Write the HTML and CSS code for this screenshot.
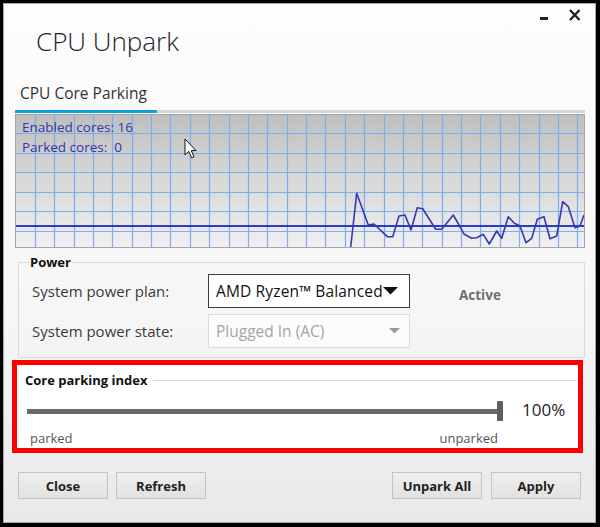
FILE: index.html
```html
<!DOCTYPE html>
<html>
<head>
<meta charset="utf-8">
<link rel="stylesheet" href="styles.css">
</head>
<body>
<div class="window">
  <div class="header">
    <div class="title">CPU Unpark</div>
    <svg class="controls" width="41" height="12" viewBox="0 0 41 12">
      <rect x="0" y="8" width="8" height="3" fill="#222"/>
      <path d="M30 1 L39.5 11 M39.5 1 L30 11" stroke="#222" stroke-width="2.4" fill="none"/>
    </svg>
  </div>
  <div class="tab">CPU Core Parking</div>
  <div class="tabbar"><div class="tabbar-active"></div></div>
  <div class="graph">
    <svg class="graph-svg" width="568" height="132" viewBox="16 115 568 132">
      <g stroke="#7cadf3" stroke-width="1.2">
        <line x1="35.5" y1="115" x2="35.5" y2="247"/><line x1="54.5" y1="115" x2="54.5" y2="247"/>
        <line x1="74.5" y1="115" x2="74.5" y2="247"/><line x1="93.5" y1="115" x2="93.5" y2="247"/>
        <line x1="112.5" y1="115" x2="112.5" y2="247"/><line x1="132.5" y1="115" x2="132.5" y2="247"/>
        <line x1="151.5" y1="115" x2="151.5" y2="247"/><line x1="170.5" y1="115" x2="170.5" y2="247"/>
        <line x1="190.5" y1="115" x2="190.5" y2="247"/><line x1="209.5" y1="115" x2="209.5" y2="247"/>
        <line x1="229.5" y1="115" x2="229.5" y2="247"/><line x1="248.5" y1="115" x2="248.5" y2="247"/>
        <line x1="267.5" y1="115" x2="267.5" y2="247"/><line x1="287.5" y1="115" x2="287.5" y2="247"/>
        <line x1="306.5" y1="115" x2="306.5" y2="247"/><line x1="325.5" y1="115" x2="325.5" y2="247"/>
        <line x1="345.5" y1="115" x2="345.5" y2="247"/><line x1="364.5" y1="115" x2="364.5" y2="247"/>
        <line x1="384.5" y1="115" x2="384.5" y2="247"/><line x1="403.5" y1="115" x2="403.5" y2="247"/>
        <line x1="422.5" y1="115" x2="422.5" y2="247"/><line x1="442.5" y1="115" x2="442.5" y2="247"/>
        <line x1="461.5" y1="115" x2="461.5" y2="247"/><line x1="480.5" y1="115" x2="480.5" y2="247"/>
        <line x1="500.5" y1="115" x2="500.5" y2="247"/><line x1="519.5" y1="115" x2="519.5" y2="247"/>
        <line x1="539.5" y1="115" x2="539.5" y2="247"/><line x1="558.5" y1="115" x2="558.5" y2="247"/>
        <line x1="577.5" y1="115" x2="577.5" y2="247"/>
        <line x1="16" y1="133.5" x2="584" y2="133.5"/><line x1="16" y1="153.5" x2="584" y2="153.5"/>
        <line x1="16" y1="172.5" x2="584" y2="172.5"/><line x1="16" y1="192.5" x2="584" y2="192.5"/>
        <line x1="16" y1="211.5" x2="584" y2="211.5"/><line x1="16" y1="231.5" x2="584" y2="231.5"/>
      </g>
      <line x1="16" y1="226" x2="584" y2="226" stroke="#2c3cc4" stroke-width="2.2"/>
      <polyline fill="none" stroke="#3438b4" stroke-width="1.6" stroke-linejoin="round"
        points="350.7,247 356.7,193.3 368.3,225 374,224 387.3,236.7 392.7,236.7 399,216 405,215 411,230 417.3,207.7 422.7,208.7 435.7,229.3 441.7,229.3 453.3,215 464.3,234.3 471.7,238.3 476.7,237.7 483.3,234.3 489.3,244 496.7,231 501.7,238.3 508.3,216.7 514.3,223.3 520,226 526,242.7 531.7,238.3 537.3,219.3 544,216.7 550,238.7 556.7,236 562.7,201.7 568.3,206.7 575,227.7 580,226 584,215"/>
    </svg>
    <div class="graph-text">
      <div>Enabled cores: 16</div>
      <div>Parked cores:&nbsp;&nbsp;0</div>
    </div>
    <svg class="cursor" width="13" height="21" viewBox="0 0 13 21">
      <path d="M1 1 L1 17 L4.8 13.4 L7.6 19.8 L10 18.8 L7.3 12.6 L12 12.6 Z" fill="#fff" stroke="#111" stroke-width="1" stroke-linejoin="round"/>
    </svg>
  </div>
  <fieldset class="power">
    <legend class="legend">Power</legend>
    <div class="power-grid">
      <div class="label">System power plan:</div>
      <div class="select">
        <span>AMD Ryzen™ Balanced</span>
        <svg width="15" height="8" viewBox="0 0 15 8"><path d="M0 0 L15 0 L7.5 7.5 Z" fill="#111"/></svg>
      </div>
      <div class="status">Active</div>
      <div class="label">System power state:</div>
      <div class="select disabled">
        <span>Plugged In (AC)</span>
        <svg width="11" height="6" viewBox="0 0 11 6"><path d="M0 0 L11 0 L5.5 5.5 Z" fill="#9a9a9a"/></svg>
      </div>
      <div></div>
    </div>
  </fieldset>
  <div class="highlight">
    <div class="group-head">
      <span class="legend">Core parking index</span>
      <span class="group-line"></span>
    </div>
    <div class="slider-row">
      <div class="slider">
        <div class="track"></div>
        <div class="thumb"></div>
      </div>
      <div class="percent">100%</div>
    </div>
    <div class="slider-labels">
      <span>parked</span>
      <span>unparked</span>
    </div>
  </div>
  <div class="buttons">
    <div class="btn-group">
      <button class="btn">Close</button>
      <button class="btn">Refresh</button>
    </div>
    <div class="btn-group right">
      <button class="btn">Unpark All</button>
      <button class="btn">Apply</button>
    </div>
  </div>
</div>
</body>
</html>
```
FILE: styles.css
```css
html, body {
  margin: 0;
  padding: 0;
  background: #000;
}
body {
  width: 600px;
  height: 527px;
  overflow: hidden;
  font-family: "Open Sans", "Noto Sans", sans-serif;
}
.window {
  margin: 3px 0 0 3px;
  width: 593px;
  height: 520px;
  box-sizing: border-box;
  border: 1px solid #a9a9a9;
  background: linear-gradient(#fdfdfd, #f6f6f6 60%, #e9e9e9);
  padding: 0 10px 0 11px;
  display: flex;
  flex-direction: column;
}
.header {
  display: flex;
  justify-content: space-between;
  align-items: flex-start;
  height: 72px;
}
.title {
  margin: 23px 0 0 21px;
  font-size: 26px;
  line-height: 28px;
  font-weight: 300;
  color: #22222e;
}
.controls {
  margin: 5px 4px 0 0;
}
.tab {
  margin: 9px 0 0 5px;
  font-size: 15.5px;
  line-height: 16px;
  color: #333;
}
.tabbar {
  margin-top: 9px;
  height: 3px;
  background: #d6d6d6;
}
.tabbar-active {
  width: 142px;
  height: 3px;
  background: #13a0e2;
}
.graph {
  margin-top: 1px;
  height: 134px;
  box-sizing: border-box;
  border: 1px solid #a5a5a5;
  background: linear-gradient(#bfbfbf, #d8d8d8 50%, #f0f0f0);
  position: relative;
}
.graph-svg {
  position: absolute;
  left: 0;
  top: 0;
}
.graph-text {
  position: relative;
  padding: 3px 0 0 6px;
  font-size: 13.5px;
  line-height: 19.5px;
  color: #3535a6;
}
.cursor {
  position: absolute;
  left: 168px;
  top: 23px;
}
.power {
  margin: 6px 0 0 3px;
  padding: 4px 0 9px 11px;
  border: 1px solid #dadada;
  min-width: 0;
}
.legend {
  padding: 0;
  font-weight: bold;
  font-size: 13px;
  line-height: 16px;
  color: #111;
}
.power-grid {
  display: grid;
  grid-template-columns: 176px 202px auto;
  row-gap: 6px;
  align-items: center;
  padding-left: 2px;
}
.label {
  font-size: 15px;
  color: #3a3a3a;
}
.select {
  height: 34px;
  box-sizing: border-box;
  border: 1px solid #3c3c3c;
  background: #fff;
  display: flex;
  align-items: center;
  padding: 0 8px 0 7px;
  font-size: 15.5px;
  letter-spacing: 0.15px;
  color: #111;
}
.select svg {
  margin-top: -1px;
}
.select.disabled {
  border-color: #dadada;
  background: #fcfcfc;
  color: #a4a4a4;
  justify-content: space-between;
  padding-right: 9px;
  letter-spacing: 0;
}
.status {
  margin: 8px 0 0 49px;
  font-weight: bold;
  font-size: 13.5px;
  color: #6e6e6e;
}
.highlight {
  margin: 2px 2px 0 -3px;
  height: 93px;
  box-sizing: border-box;
  border: 5px solid #ff0000;
  background: #fff;
}
.group-head {
  display: flex;
  align-items: center;
  margin: 7px 1px 0 8px;
}
.group-head .legend {
  padding-right: 5px;
}
.group-line {
  flex: 1;
  border-top: 1px solid #d9d9d9;
}
.slider-row {
  display: flex;
  align-items: flex-start;
  margin: 13px 0 0 10px;
}
.slider {
  width: 476px;
  height: 20px;
  display: flex;
  align-items: center;
}
.track {
  width: 473px;
  height: 5px;
  background: #6a6a6a;
}
.thumb {
  width: 6px;
  height: 20px;
  margin-left: -3px;
  background: #5e5e5e;
  border-radius: 1px;
}
.percent {
  margin: -1px 0 0 19px;
  font-size: 17px;
  line-height: 20px;
  color: #222;
}
.slider-labels {
  width: 468px;
  margin: 9px 0 0 13px;
  display: flex;
  justify-content: space-between;
  font-size: 13px;
  line-height: 16px;
  color: #555;
}
.buttons {
  margin: 19px 4px 0 3px;
  display: flex;
  justify-content: space-between;
}
.btn-group {
  display: flex;
  gap: 8px;
}
.btn-group.right {
  gap: 9px;
}
.btn {
  width: 90px;
  height: 27px;
  box-sizing: border-box;
  border: 1px solid #c3c3c3;
  background: linear-gradient(#eeeeee, #e2e2e2);
  font-family: "Open Sans", "Noto Sans", sans-serif;
  font-weight: bold;
  font-size: 13px;
  color: #222;
  padding: 0;
}
```
